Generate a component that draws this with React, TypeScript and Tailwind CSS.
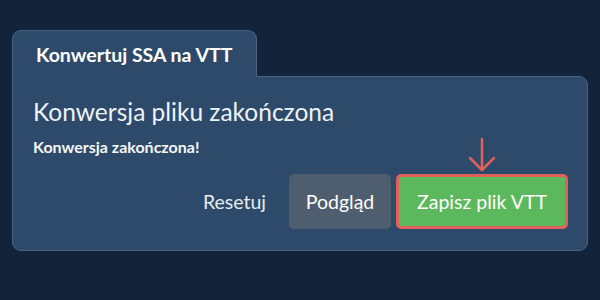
import React from "react";

export default function App() {
  return (
    <div
      className="w-[600px] h-[300px] bg-[#12233a] pt-[30px] pl-[12px]"
      style={{ fontFamily: "Lato, 'Noto Sans', sans-serif" }}
    >
      <div className="relative z-10 w-[245px] h-[47px] bg-[#2d4a6a] border border-b-0 border-[#4a6383] rounded-t-[9px] pl-[23px] pt-[12px]">
        <div className="text-[19.5px] font-bold text-white leading-[24px]">Konwertuj SSA na VTT</div>
      </div>
      <div className="-mt-px w-[576px] h-[175px] bg-[#2d4a6a] border border-[#4a6383] rounded-b-[9px] rounded-tr-[9px] px-[20px] pt-[20px]">
        <div className="text-[24.5px] leading-[30px] text-[#eef2f6]">Konwersja pliku zakończona</div>
        <div className="mt-[10px] text-[16px] leading-[20px] font-bold text-[#f4f6f8]">Konwersja zakończona!</div>
        <div className="mt-[17px] flex items-center justify-end -mr-[1px]">
          <span className="text-[19.5px] text-[#e6ebf0] mr-[23px]">Resetuj</span>
          <div className="w-[102px] h-[55px] rounded-[5px] bg-[#4f5e6f] flex items-center justify-center text-[19.5px] text-white">
            Podgląd
          </div>
          <div className="relative ml-[5px] w-[172px] h-[55px] rounded-[5px] border-[3px] border-[#e0605c] bg-[#5cb85c] flex items-center justify-center text-[19.5px] text-white">
            Zapisz plik VTT
            <svg
              className="absolute left-1/2 -translate-x-1/2 -top-[40px]"
              width="30"
              height="38"
              viewBox="0 0 30 38"
              fill="none"
              stroke="#e0605c"
              strokeWidth="2.5"
              strokeLinecap="round"
              strokeLinejoin="round"
            >
              <path d="M15 2 V33" />
              <path d="M3 21 L15 33 L27 21" />
            </svg>
          </div>
        </div>
      </div>
    </div>
  );
}
